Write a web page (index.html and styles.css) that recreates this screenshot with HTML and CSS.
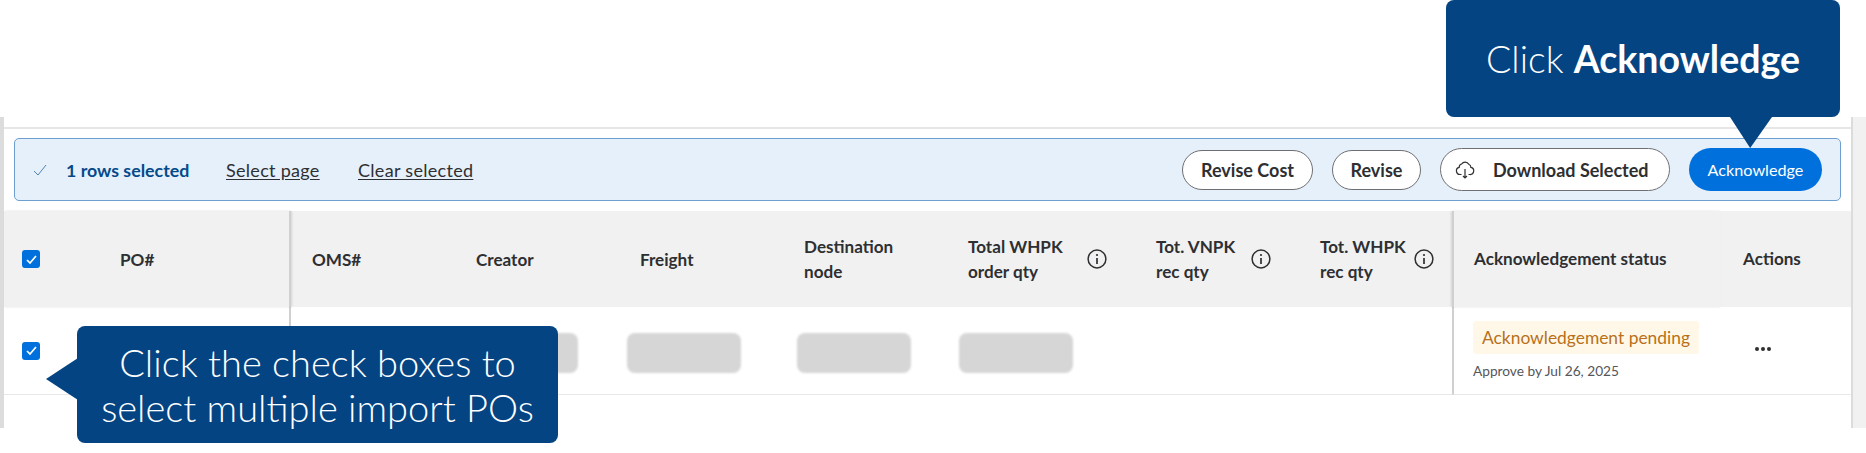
FILE: index.html
```html
<!DOCTYPE html>
<html lang="en">
<head>
<meta charset="utf-8">
<title>Import POs</title>
<link rel="stylesheet" href="styles.css">
</head>
<body>
<div class="page">
  <div class="top-space"></div>
  <div class="frame">
    <div class="strip-left"></div>
    <div class="panel">
      <div class="rule"></div>
      <div class="bar">
        <div class="bar-left">
          <svg class="bar-check" width="14" height="12" viewBox="0 0 14 12"><path d="M1 7l4 4 8-10" fill="none" stroke="#4d84b8" stroke-width="1"/></svg>
          <span class="count">1 rows selected</span>
          <a class="link link-page">Select page</a>
          <a class="link">Clear selected</a>
        </div>
        <div class="bar-right">
          <button class="btn btn-cost">Revise Cost</button>
          <button class="btn btn-revise">Revise</button>
          <button class="btn btn-download">
            <svg width="20" height="20" viewBox="0 0 20 20"><path d="M6.5 14.5H5.2A3.6 3.6 0 0 1 4.2 7.4 3.3 3.3 0 0 1 6.6 4 4.2 4.2 0 0 1 13.8 4.2 3.4 3.4 0 0 1 15.9 7.4 3.6 3.6 0 0 1 14.8 14.5H13.5M10 9v9M8 16l2 2 2-2" fill="none" stroke="#2e2f32" stroke-width="1.2"/></svg>
            <span>Download Selected</span>
          </button>
          <button class="btn btn-primary">Acknowledge</button>
        </div>
      </div>
      <div class="grid">
        <div class="th first"><span class="box"><svg width="13" height="13" viewBox="0 0 13 13"><path d="M2 7l3 3 6-7" fill="none" stroke="#fff" stroke-width="1.7"/></svg></span><span class="po">PO#</span></div>
        <div class="th after-first">OMS#</div>
        <div class="th">Creator</div>
        <div class="th">Freight</div>
        <div class="th">Destination<br>node</div>
        <div class="th info pr28"><span>Total WHPK<br>order qty</span><svg class="i" width="20" height="20" viewBox="0 0 20 20"><circle cx="10" cy="10" r="8.9" fill="none" stroke="#2e2f32" stroke-width="1.5"/><circle cx="10" cy="6" r="1.1" fill="#2e2f32"/><path d="M10 9v6" stroke="#2e2f32" stroke-width="1.7"/></svg></div>
        <div class="th info pr28"><span>Tot. VNPK<br>rec qty</span><svg class="i" width="20" height="20" viewBox="0 0 20 20"><circle cx="10" cy="10" r="8.9" fill="none" stroke="#2e2f32" stroke-width="1.5"/><circle cx="10" cy="6" r="1.1" fill="#2e2f32"/><path d="M10 9v6" stroke="#2e2f32" stroke-width="1.7"/></svg></div>
        <div class="th info pr18"><span>Tot. WHPK<br>rec qty</span><svg class="i" width="20" height="20" viewBox="0 0 20 20"><circle cx="10" cy="10" r="8.9" fill="none" stroke="#2e2f32" stroke-width="1.5"/><circle cx="10" cy="6" r="1.1" fill="#2e2f32"/><path d="M10 9v6" stroke="#2e2f32" stroke-width="1.7"/></svg></div>
        <div class="th status">Acknowledgement status</div>
        <div class="th actions">Actions</div>

        <div class="td first"><span class="box"><svg width="13" height="13" viewBox="0 0 13 13"><path d="M2 7l3 3 6-7" fill="none" stroke="#fff" stroke-width="1.7"/></svg></span></div>
        <div class="td"></div>
        <div class="td"><span class="ph ph-creator"></span></div>
        <div class="td"><span class="ph ph-freight"></span></div>
        <div class="td"><span class="ph ph-dest"></span></div>
        <div class="td"><span class="ph ph-total"></span></div>
        <div class="td"></div>
        <div class="td"></div>
        <div class="td status status-cell">
          <span class="badge">Acknowledgement pending</span>
          <span class="approve">Approve by Jul 26, 2025</span>
        </div>
        <div class="td dots-cell"><span class="dots"><i></i><i></i><i></i></span></div>
      </div>
    </div>
    <div class="strip-right"></div>
  </div>
  <div class="callout callout-top">
    <span>Click <b>Acknowledge</b></span>
  </div>
  <div class="callout callout-left">
    <span>Click the check boxes to<br>select multiple import POs</span>
  </div>
</div>
</body>
</html>
```
FILE: styles.css
```css
* { box-sizing: border-box; }
html, body { margin: 0; padding: 0; background: #fff; }
body { font-family: "Lato", "Open Sans", sans-serif; color: #2e2f32; overflow: hidden; }
.page { position: relative; width: 1866px; height: 453px; }
.top-space { height: 117px; }
.frame { display: flex; height: 311px; }
.strip-left { width: 4px; background: #dcdcdc; }
.strip-right { width: 15px; background: #f1f1f1; border-left: 2px solid #dcdcdc; }
.panel { flex: 1; min-width: 0; background: #fff; }
.rule { height: 2px; margin-top: 10px; background: #e6e6e6; }
.bar { display: flex; align-items: center; justify-content: space-between; height: 63px; margin: 9px 10px 10px 10px; padding: 0 18px 0 18px; background: #e6f0fa; border: 1px solid #6d9fd0; border-radius: 5px; }
.bar-left { display: flex; align-items: center; font-size: 18px; }
.bar-check { margin-right: 19px; }
.count { font-weight: 700; font-size: 17.8px; color: #044a8a; width: 160px; }
.link { color: #2e2f32; text-decoration: underline; text-underline-offset: 2px; letter-spacing: 0.3px; }
.link-page { width: 132px; }
.bar-right { display: flex; align-items: center; }
.btn { height: 40px; padding: 0; background: #fff; border: 1px solid #6f6f72; border-radius: 20px; font: 700 18px "Lato", sans-serif; color: #2e2f32; }
.btn-cost { width: 131px; margin-right: 19px; }
.btn-revise { width: 89px; margin-right: 19px; }
.btn-download { display: flex; align-items: center; width: 230px; height: 43px; border-radius: 22px; padding-left: 14px; margin-right: 19px; }
.btn-download span { margin-left: 18px; }
.btn-primary { width: 133px; height: 43px; border: none; border-radius: 22px; background: #0071dc; color: #fff; font-weight: 400; font-size: 16.2px; }
.grid { display: grid; grid-template-columns: 287px 163px 164px 164px 164px 188px 164px 154px 269px 130px; grid-template-rows: 96px 88px; }
.th { display: flex; align-items: center; padding-left: 22px; background: #f1f1f1; font-size: 17.1px; font-weight: 700; line-height: 25px; }
.th.after-first { padding-left: 21px; }
.th.first, .td.first { padding-left: 18px; border-right: 2px solid #cfd0d2; }
.th.first { box-shadow: 1px 0 2px rgba(0, 0, 0, 0.12); position: relative; }
.th.info { justify-content: space-between; }
.pr28 { padding-right: 27px; }
.pr18 { padding-right: 18px; }
.th.status, .td.status { border-left: 2px solid #cfd0d2; padding-left: 20px; }
.td.status { padding-left: 19px; }
.th.status { box-shadow: -1px 0 2px rgba(0, 0, 0, 0.12); position: relative; }
.th.status, .th.actions { align-items: flex-start; padding-top: 35px; }
.box { display: flex; align-items: center; justify-content: center; width: 18px; height: 18px; background: #0071dc; border-radius: 3px; }
.po { margin-left: 80px; }
.td { display: flex; align-items: center; border-bottom: 1px solid #e8e8e8; }
.ph { display: block; width: 114px; height: 40px; background: #d6d6d6; border-radius: 8px; filter: blur(1px); margin-top: 4px; }
.ph-creator { margin-left: 10px; }
.ph-freight { margin-left: 9px; }
.ph-dest { margin-left: 15px; }
.ph-total { margin-left: 13px; }
.status-cell { flex-direction: column; align-items: flex-start; padding-top: 14px; }
.badge { display: block; height: 33px; width: 226px; padding-left: 9px; background: #fff8e8; border-radius: 3px; color: #b8701a; font-size: 17.4px; line-height: 34px; white-space: nowrap; }
.approve { margin-top: 8px; font-size: 13.7px; line-height: 18px; color: #55565a; }
.dots-cell { padding-left: 34px; }
.dots { display: flex; gap: 2px; margin-top: -4px; }
.dots i { display: block; width: 4px; height: 4px; border-radius: 50%; background: #2e2f32; }
.callout { position: absolute; display: flex; align-items: center; justify-content: center; background: #044483; color: #fff; border-radius: 8px; font-weight: 300; text-align: center; }
.callout::after { content: ""; position: absolute; background: #044483; }
.callout-top { left: 1446px; top: 0; width: 394px; height: 117px; font-size: 37.5px; }
.callout-top b { font-weight: 700; }
.callout-top::after { left: 284px; top: 117px; width: 42px; height: 31px; clip-path: polygon(0 0, 100% 0, 48% 100%); }
.callout-left { left: 77px; top: 326px; width: 481px; height: 117px; font-size: 38px; line-height: 45px; }
.callout-left::after { left: -31px; top: 32px; width: 32px; height: 42px; clip-path: polygon(100% 0, 100% 100%, 0 50%); }
```
